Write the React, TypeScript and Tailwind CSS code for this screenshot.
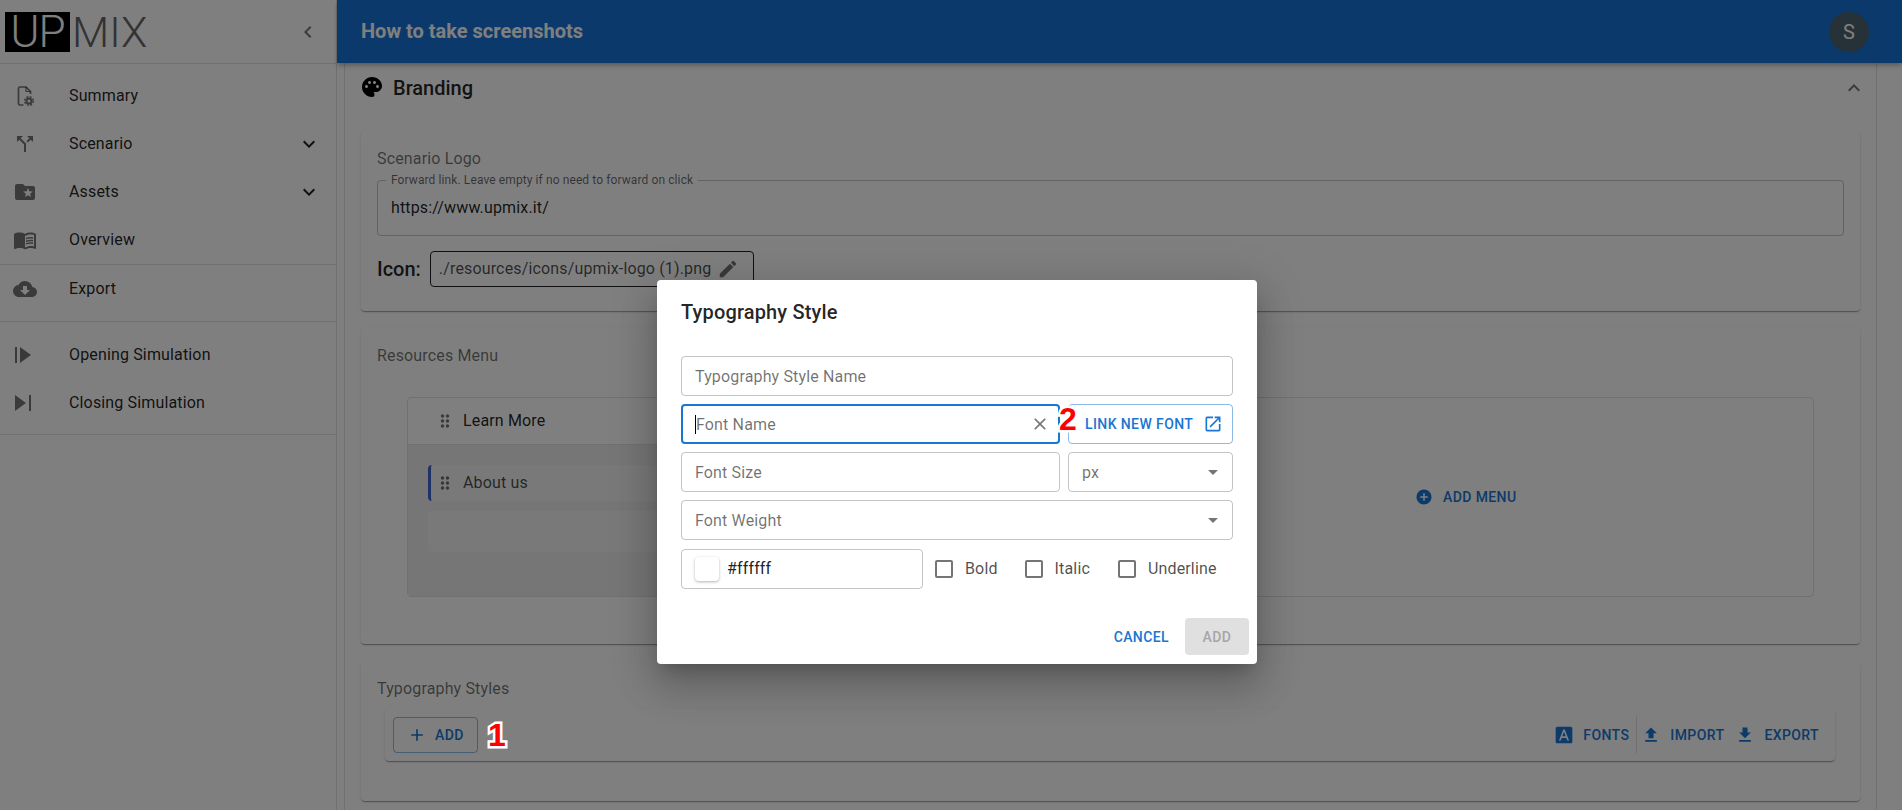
import React from 'react';
import {
  MdAdd,
  MdAddCircle,
  MdArrowDropDown,
  MdCallSplit,
  MdChevronLeft,
  MdClose,
  MdCloudDownload,
  MdDragIndicator,
  MdEdit,
  MdExpandLess,
  MdExpandMore,
  MdFileDownload,
  MdFileUpload,
  MdFolderSpecial,
  MdFontDownload,
  MdMenuBook,
  MdOpenInNew,
  MdPalette,
} from 'react-icons/md';

const cardShadow =
  'rounded shadow-[0_2px_1px_-1px_rgba(0,0,0,0.2),0_1px_1px_0_rgba(0,0,0,0.14),0_1px_3px_0_rgba(0,0,0,0.12)]';

function SummaryIcon() {
  return (
    <svg width="24" height="24" viewBox="0 0 24 24" fill="none">
      <path
        d="M10.5 21H7a1.5 1.5 0 0 1-1.5-1.500V4.500A1.500 1.500 0 0 1 7 3h6l4.500 4.500V10"
        stroke="currentColor"
        strokeWidth="1.700"
      />
      <path d="M13 3v4.500h4.500" stroke="currentColor" strokeWidth="1.200" />
      <circle cx="16" cy="17" r="2.500" stroke="currentColor" strokeWidth="2" />
      <circle cx="16" cy="17" r="4.300" stroke="currentColor" strokeWidth="1.400" strokeDasharray="2 1.400" />
    </svg>
  );
}

function OpeningIcon() {
  return (
    <svg width="24" height="24" viewBox="0 0 24 24" fill="currentColor">
      <path d="M2 4h2v16H2zM7 4v16l11-8z" />
    </svg>
  );
}

function ClosingIcon() {
  return (
    <svg width="24" height="24" viewBox="0 0 24 24" fill="currentColor">
      <path d="M2 4v16l11-8zM16 4h2v16h-2z" />
    </svg>
  );
}

function NavItem({
  icon,
  label,
  expand,
}: {
  icon: React.ReactNode;
  label: string;
  expand?: boolean;
}) {
  return (
    <div className="flex h-12 items-center pl-[13px] pr-[15px] text-[#000000de]">
      <span className="flex w-[56px] shrink-0 text-[#0000008a]">{icon}</span>
      <span className="flex-1 text-base tracking-[0.15px]">{label}</span>
      {expand && <MdExpandMore size={24} className="text-[#000000de]" />}
    </div>
  );
}

function Sidebar() {
  return (
    <aside className="flex h-full w-[337px] shrink-0 flex-col border-r border-[#0000001f]">
      <div className="flex h-[64px] shrink-0 items-center border-b border-[#0000001f] pl-[5px] pr-[16px]">
        <div className="flex h-10 w-[65px] items-center justify-center bg-black text-[44px] font-light leading-10 tracking-[-1px] text-white">
          UP
        </div>
        <span className="ml-[2px] flex-1 text-[43px] font-light leading-10 text-[#666666]">MIX</span>
        <MdChevronLeft size={24} className="text-[#0000008a]" />
      </div>
      <div className="border-b border-[#0000001f] pt-2">
        <NavItem icon={<SummaryIcon />} label="Summary" />
        <NavItem icon={<MdCallSplit size={24} />} label="Scenario" expand />
        <NavItem icon={<MdFolderSpecial size={24} />} label="Assets" expand />
        <NavItem icon={<MdMenuBook size={24} />} label="Overview" />
      </div>
      <div className="h-[57px] border-b border-[#0000001f]">
        <NavItem icon={<MdCloudDownload size={24} />} label="Export" />
      </div>
      <div className="border-b border-[#0000001f] pb-[7px] pt-[9px]">
        <NavItem icon={<OpeningIcon />} label="Opening Simulation" />
        <NavItem icon={<ClosingIcon />} label="Closing Simulation" />
      </div>
    </aside>
  );
}

function BrandingCard() {
  return (
    <div className={`${cardShadow} mx-[16px] h-[180px] px-4 pt-[18px]`}>
      <div className="text-base leading-5 tracking-[0.15px] text-[#0000008f]">Scenario Logo</div>
      <fieldset className="mt-[4px] h-[63px] rounded border border-[#0000003b] pl-[8px] pr-3">
        <legend className="px-[5px] text-xs leading-[14px] tracking-[0.1px] text-[#00000099]">
          Forward link. Leave empty if no need to forward on click
        </legend>
        <div className="pl-[5px] pt-[9px] text-base leading-6 tracking-[0.15px] text-[#000000de]">
          https://www.upmix.it/
        </div>
      </fieldset>
      <div className="mt-[15px] flex items-center gap-[9px]">
        <span className="text-xl font-medium text-[#000000de]">Icon:</span>
        <div className="flex h-9 w-[324px] items-center gap-[6px] rounded border border-[#000000de] pl-2 text-base tracking-[0.15px] text-[#000000b3]">
          ./resources/icons/upmix-logo (1).png
          <MdEdit size={22} className="text-[#0000008a]" />
        </div>
      </div>
    </div>
  );
}

function ResourcesCard() {
  return (
    <div className={`${cardShadow} mx-[16px] mt-[17px] h-[316px] px-4 pt-[18px]`}>
      <div className="text-base leading-5 tracking-[0.15px] text-[#0000008f]">Resources Menu</div>
      <div className="mx-[30px] mt-[31px] flex h-[200px] rounded border border-[#0000001f]">
        <div className="flex w-1/2 flex-col">
          <div className="flex h-[47px] items-center gap-[8px] border-b border-[#0000001f] pl-[27px] text-base tracking-[0.15px] text-[#000000de]">
            <MdDragIndicator size={20} className="text-[#0000008a]" />
            Learn More
          </div>
          <div className="flex-1 bg-[#ececec] pl-[20px] pt-[20px]">
            <div className="flex h-9 items-center gap-[8px] rounded-l border-l-[3px] border-[#3f63d2] bg-[#f2f2f2] pl-[4px] text-base tracking-[0.15px] text-[#000000b3]">
              <MdDragIndicator size={20} className="text-[#0000008a]" />
              About us
            </div>
            <div className="mt-[10px] h-[41px] rounded-l bg-[#f2f2f2]" />
          </div>
        </div>
        <div className="flex flex-1 items-center justify-center gap-[10px] pl-[8px] text-sm font-medium tracking-[0.4px] text-[#1976d2]">
          <MdAddCircle size={18} />
          ADD MENU
        </div>
      </div>
    </div>
  );
}

function ToolButton({ icon, label }: { icon: React.ReactNode; label: string }) {
  return (
    <div className="flex items-center gap-[9px] text-sm font-medium tracking-[0.4px] text-[#1976d2]">
      {icon}
      {label}
    </div>
  );
}

function TypographyCard() {
  return (
    <div className={`${cardShadow} mx-[16px] mt-[17px] h-[140px] px-4 pt-[18px]`}>
      <div className="text-base leading-5 tracking-[0.15px] text-[#0000008f]">Typography Styles</div>
      <div className={`${cardShadow} ml-2 mr-[9px] mt-[9px] flex h-[53px] items-center px-2`}>
        <div className="flex h-9 w-[85px] items-center justify-center gap-2 rounded border border-[#1976d280] text-sm font-medium tracking-[0.4px] text-[#1976d2]">
          <MdAdd size={20} />
          ADD
        </div>
        <div className="ml-auto flex items-center pr-[8px]">
          <ToolButton icon={<MdFontDownload size={20} />} label="FONTS" />
          <div className="ml-[7px] mr-[4px] h-[37px] w-px bg-[#0000001f]" />
          <ToolButton icon={<MdFileUpload size={20} />} label="IMPORT" />
          <div className="w-[11px]" />
          <ToolButton icon={<MdFileDownload size={20} />} label="EXPORT" />
        </div>
      </div>
    </div>
  );
}

function Field({
  text,
  className,
  children,
}: {
  text: string;
  className?: string;
  children?: React.ReactNode;
}) {
  return (
    <div
      className={`flex h-10 items-center rounded border border-[#0000003b] pl-[13px] pr-[7px] text-base tracking-[0.15px] text-[#0000008f] ${className ?? ''}`}
    >
      <span className="flex-1 pt-[2px]">{text}</span>
      {children}
    </div>
  );
}

function Check({ label, className }: { label: string; className: string }) {
  return (
    <div className={`flex items-center gap-[12px] text-base tracking-[0.15px] text-[#000000b3] ${className}`}>
      <span className="h-[18px] w-[18px] rounded-[2px] border-2 border-[#0000008a]" />
      {label}
    </div>
  );
}

function TypographyDialog() {
  return (
    <div className="absolute left-[657px] top-[280px] h-[384px] w-[600px] rounded bg-white px-6 pt-4 shadow-[0_11px_15px_-7px_rgba(0,0,0,0.2),0_24px_38px_3px_rgba(0,0,0,0.14),0_9px_46px_8px_rgba(0,0,0,0.12)]">
      <h2 className="text-xl font-medium leading-8 tracking-[0.15px] text-[#000000de]">Typography Style</h2>
      <div className="mt-7 flex flex-col gap-2">
        <Field text="Typography Style Name" />
        <div className="flex gap-[8px]">
          <div className="flex h-10 w-[379px] items-center rounded border-2 border-[#1976d2] pl-[12px] pr-[8px] text-base tracking-[0.15px] text-[#0000008f]">
            <span className="h-[19px] w-px bg-black" />
            <span className="flex-1 pt-[2px]">Font Name</span>
            <MdClose size={20} className="text-[#0000008a]" />
          </div>
          <div className="flex flex-1 items-center gap-[10px] rounded border border-[#1976d280] pl-[16px] text-sm font-medium tracking-[0.4px] text-[#1976d2]">
            LINK NEW FONT
            <MdOpenInNew size={20} />
          </div>
        </div>
        <div className="flex gap-[8px]">
          <Field text="Font Size" className="w-[379px]" />
          <Field text="px" className="flex-1 text-[#000000b3]">
            <MdArrowDropDown size={24} className="text-[#0000008a]" />
          </Field>
        </div>
        <Field text="Font Weight">
          <MdArrowDropDown size={24} className="text-[#0000008a]" />
        </Field>
        <div className="mt-px flex items-center">
          <div className="flex h-10 w-[242px] items-center gap-2 rounded border border-[#0000003b] pl-[13px] text-base tracking-[0.15px] text-[#000000de]">
            <span className="h-6 w-6 rounded bg-white shadow-[0_1px_3px_rgba(0,0,0,0.3)]" />
            #ffffff
          </div>
          <Check label="Bold" className="ml-[12px]" />
          <Check label="Italic" className="ml-[27px]" />
          <Check label="Underline" className="ml-[28px]" />
        </div>
      </div>
      <div className="absolute bottom-[9px] right-[8px] flex items-center">
        <span className="text-sm font-medium tracking-[0.4px] text-[#1976d2]">CANCEL</span>
        <span className="ml-[16px] flex h-[37px] w-[64px] items-center justify-center rounded bg-[#e0e0e0] text-sm font-medium tracking-[0.4px] text-[#a6a6a6]">
          ADD
        </span>
      </div>
    </div>
  );
}

function Marker({ text, className }: { text: string; className: string }) {
  return (
    <span
      className={`absolute font-['Liberation_Sans',sans-serif] text-[32px] font-bold leading-none text-[#ff0000] [-webkit-text-stroke:5px_#ffffff] [paint-order:stroke_fill] ${className}`}
    >
      {text}
    </span>
  );
}

export default function App() {
  return (
    <div className="relative flex h-[810px] w-[1902px] overflow-hidden bg-white font-['Roboto',sans-serif]">
      <Sidebar />
      <div className="flex h-full flex-1 flex-col">
        <header className="z-10 flex h-[63px] shrink-0 items-center justify-between bg-[#1672d6] pl-6 pr-[33px] shadow-[0_2px_4px_-1px_rgba(0,0,0,0.2),0_4px_5px_0_rgba(0,0,0,0.14)]">
          <span className="-mt-[2px] text-xl font-bold text-white">How to take screenshots</span>
          <span className="flex h-10 w-10 items-center justify-center rounded-full bg-[#4c6470] text-xl text-white">
            S
          </span>
        </header>
        <main className="ml-[7px] mr-[25px] flex-1 overflow-hidden border-x border-[#0000001f]">
          <div className="flex h-[49px] items-center pl-[2px] pr-[10px]">
            <div className="ml-[3px] flex flex-1 items-center gap-[9px] text-xl font-medium text-[#000000de]">
              <MdPalette size={24} className="ml-[10px] -mt-[2px] text-black" />
              Branding
            </div>
            <MdExpandLess size={24} className="text-[#0000008a]" />
          </div>
          <div className="pt-[19px]">
            <BrandingCard />
            <ResourcesCard />
            <TypographyCard />
          </div>
        </main>
      </div>

      {/* backdrop + dialog */}
      <div className="absolute inset-0 z-20 bg-black/50">
        <TypographyDialog />
        <Marker text="1" className="left-[488px] top-[719px]" />
        <Marker text="2" className="left-[1059px] top-[403px]" />
      </div>
    </div>
  );
}
